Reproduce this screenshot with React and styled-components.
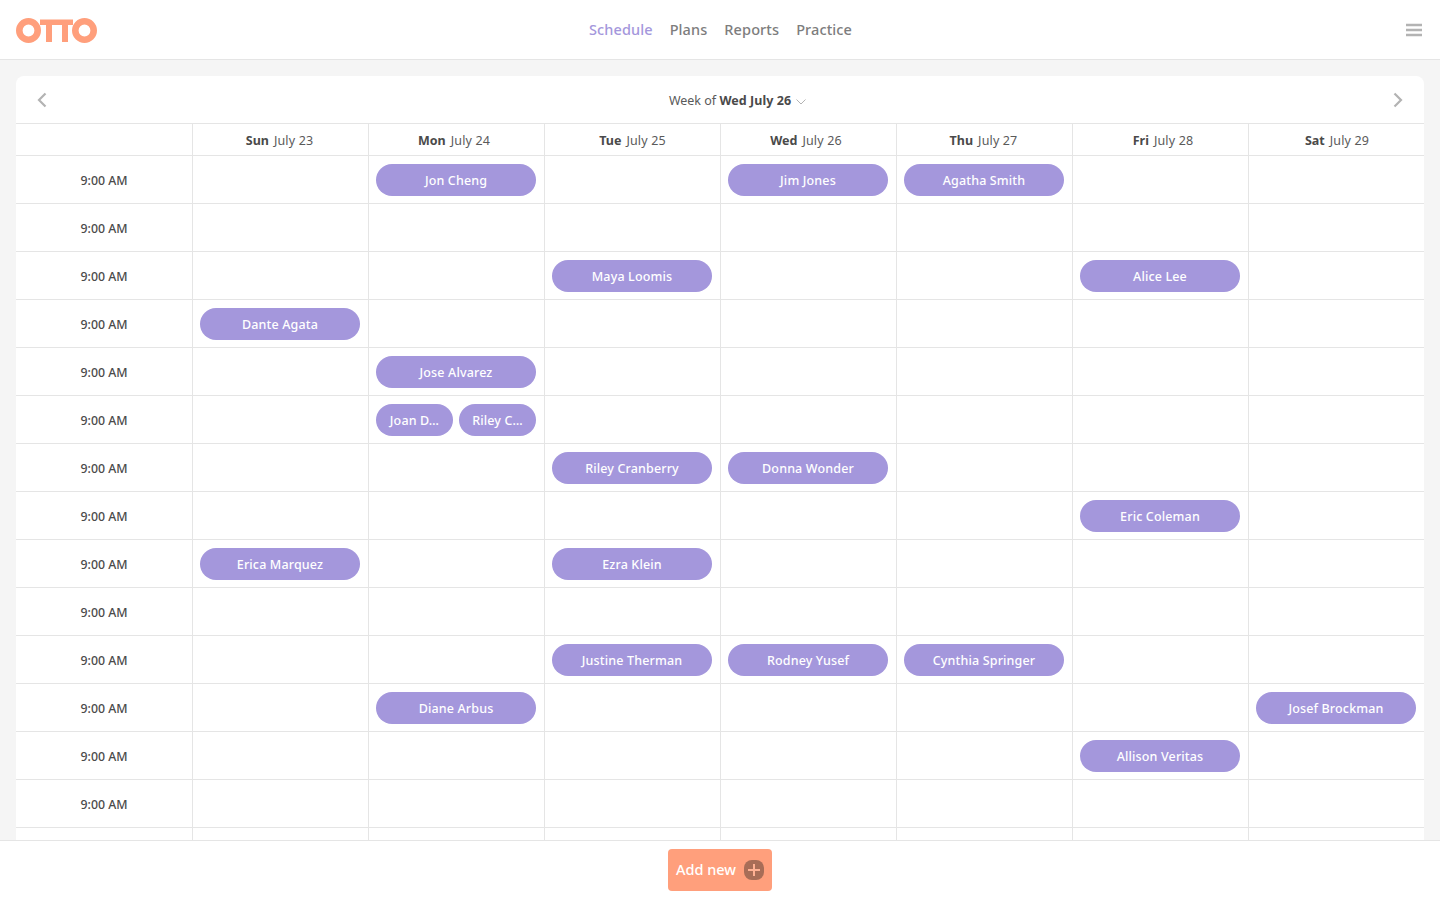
import React from 'react';
import styled, { createGlobalStyle } from 'styled-components';

const Global = createGlobalStyle`
  html, body { margin: 0; height: 100%; background: #f5f5f5; }
  * { box-sizing: border-box; }
  body { font-family: "Noto Sans", "Open Sans", sans-serif; color: #4a4a4a; overflow: hidden; }
`;

const Page = styled.div`
  height: 100vh;
  display: flex;
  flex-direction: column;
`;
const Header = styled.header`
  height: 60px;
  flex: none;
  background: #fff;
  border-bottom: 1px solid #e5e5e5;
  display: grid;
  grid-template-columns: 1fr auto 1fr;
  align-items: center;
  padding: 0 18px 0 16px;
`;
const Logo = styled.svg`
  display: block;
  width: 82px;
  height: 26px;
`;
const Nav = styled.nav`
  display: flex;
  gap: 17px;
  padding: 0 0 2px 3px;
`;
const NavLink = styled.a`
  font-size: 14.5px;
  font-weight: 500;
  line-height: 20px;
  letter-spacing: 0.1px;
  color: ${p => (p.$active ? '#a497dc' : '#7d7d7d')};
`;
const Menu = styled.svg`
  justify-self: end;
  display: block;
  width: 16px;
  height: 14px;
`;
const Main = styled.main`
  flex: 1;
  min-height: 0;
  overflow: hidden;
  padding: 16px 16px 0;
`;
const Card = styled.section`
  background: #fff;
  border-radius: 8px 8px 0 0;
  overflow: hidden;
`;
const Toolbar = styled.div`
  height: 48px;
  border-bottom: 1px solid #e5e5e5;
  display: flex;
  align-items: center;
  justify-content: space-between;
  padding: 0 20px;
`;
const Arrow = styled.svg`
  display: block;
  width: 12px;
  height: 16px;
  fill: none;
  stroke: #b3b3b3;
  stroke-width: 2.2;
`;
const Week = styled.div`
  display: flex;
  align-items: center;
  gap: 5px;
  margin-left: 35px;
  padding-top: 2px;
  font-size: 12.5px;
  line-height: 18px;
  color: #5a5a5a;
  b { font-weight: 700; color: #4a4a4a; letter-spacing: 0.05px; }
`;
const Chevron = styled.svg`
  display: block;
  width: 10px;
  height: 6px;
  margin-top: 3px;
  fill: none;
  stroke: #b3b3b3;
  stroke-width: 1;
`;
const Row = styled.div`
  display: grid;
  grid-template-columns: 176px repeat(7, 176px);
  height: ${p => (p.$head ? '32px' : '48px')};
  border-bottom: 1px solid #e5e5e5;
`;
const TimeCell = styled.div`
  display: flex;
  align-items: center;
  justify-content: center;
  padding-top: 2px;
  font-size: 12.3px;
  font-weight: 500;
  color: #4a4a4a;
`;
const HeadCell = styled.div`
  border-left: 1px solid #e5e5e5;
  display: flex;
  align-items: center;
  justify-content: center;
  gap: 5px;
  padding: 2px ${p => Math.max(p.$shift, 0)}px 0 ${p => Math.max(-p.$shift, 0)}px;
  font-size: 12.5px;
  color: #5a5a5a;
  span { letter-spacing: 0.15px; }
  b { font-weight: 700; color: #4a4a4a; }
`;
const Cell = styled.div`
  border-left: 1px solid #e5e5e5;
  padding: 8px 8px 7px 7px;
  display: flex;
  gap: 6px;
  min-width: 0;
`;
const Pill = styled.div`
  flex: 1 1 0;
  min-width: 0;
  height: 32px;
  border-radius: 16px;
  background: #a497dc;
  color: #fff;
  font-size: 12.5px;
  font-weight: 500;
  letter-spacing: 0.15px;
  line-height: 34px;
  text-align: center;
  padding: 0 9px;
  white-space: nowrap;
`;
const Footer = styled.footer`
  height: 60px;
  flex: none;
  background: #fff;
  border-top: 1px solid #e5e5e5;
  display: flex;
  justify-content: center;
  padding-top: 8px;
`;
const AddButton = styled.button`
  width: 104px;
  height: 42px;
  border: 0;
  border-radius: 4px;
  background: #ff9f7c;
  color: #fff;
  font-family: inherit;
  font-size: 14.5px;
  font-weight: 500;
  display: flex;
  align-items: center;
  justify-content: space-between;
  padding: 0 8px;
`;
const AddLabel = styled.span`
  display: block;
  margin-top: -2px;
`;
const PlusIcon = styled.svg`
  display: block;
  width: 20px;
  height: 20px;
`;

const days = [
  ['Sun', 'July 23', 2],
  ['Mon', 'July 24', 5],
  ['Tue', 'July 25', 0],
  ['Wed', 'July 26', 5],
  ['Thu', 'July 27', 2],
  ['Fri', 'July 28', -5],
  ['Sat', 'July 29', -1],
];

const schedule = [
  { 1: ['Jon Cheng'], 3: ['Jim Jones'], 4: ['Agatha Smith'] },
  {},
  { 2: ['Maya Loomis'], 5: ['Alice Lee'] },
  { 0: ['Dante Agata'] },
  { 1: ['Jose Alvarez'] },
  { 1: ['Joan D…', 'Riley C…'] },
  { 2: ['Riley Cranberry'], 3: ['Donna Wonder'] },
  { 5: ['Eric Coleman'] },
  { 0: ['Erica Marquez'], 2: ['Ezra Klein'] },
  {},
  { 2: ['Justine Therman'], 3: ['Rodney Yusef'], 4: ['Cynthia Springer'] },
  { 1: ['Diane Arbus'], 6: ['Josef Brockman'] },
  { 5: ['Allison Veritas'] },
  {},
  {},
];

export default function App() {
  return (
    <Page>
      <Global />
      <Header>
        <Logo viewBox="0 0 82 26" aria-label="OTTO">
          <g fill="none" stroke="#ff9f7c" strokeWidth="6.6">
            <circle cx="12.500" cy="13.500" r="9.200" />
            <circle cx="68.500" cy="13.500" r="9.200" />
          </g>
          <path fill="#ff9f7c" d="M24 2.500h33v5.500h-5v17h-6V8h-10v17h-6V8h-6z" />
        </Logo>
        <Nav>
          <NavLink $active>Schedule</NavLink>
          <NavLink>Plans</NavLink>
          <NavLink>Reports</NavLink>
          <NavLink>Practice</NavLink>
        </Nav>
        <Menu viewBox="0 0 16 14">
          <path stroke="#b3b3b3" strokeWidth="2.4" d="M0 2h16M0 7h16M0 12h16" />
        </Menu>
      </Header>
      <Main>
        <Card>
          <Toolbar>
            <Arrow viewBox="0 0 12 16"><path d="M9.500 1.500 3 8l6.500 6.500" /></Arrow>
            <Week>
              <span>Week of <b>Wed July 26</b></span>
              <Chevron viewBox="0 0 10 6"><path d="M.5.500 5 5 9.500.5" /></Chevron>
            </Week>
            <Arrow viewBox="0 0 12 16"><path d="M2.500 1.500 9 8l-6.500 6.500" /></Arrow>
          </Toolbar>
          <Row $head>
            <div />
            {days.map(([d, date, shift]) => (
              <HeadCell key={d} $shift={shift}><b>{d}</b><span>{date}</span></HeadCell>
            ))}
          </Row>
          {schedule.map((row, i) => (
            <Row key={i}>
              <TimeCell>{i < 14 ? '9:00 AM' : ''}</TimeCell>
              {days.map((_, c) => (
                <Cell key={c}>
                  {(row[c] || []).map(name => <Pill key={name}>{name}</Pill>)}
                </Cell>
              ))}
            </Row>
          ))}
        </Card>
      </Main>
      <Footer>
        <AddButton>
          <AddLabel>Add new</AddLabel>
          <PlusIcon viewBox="0 0 20 20">
            <rect width="20" height="20" rx="8" fill="#a86d57" />
            <path stroke="#ffb194" strokeWidth="2" d="M10 4v12M4 10h12" />
          </PlusIcon>
        </AddButton>
      </Footer>
    </Page>
  );
}
